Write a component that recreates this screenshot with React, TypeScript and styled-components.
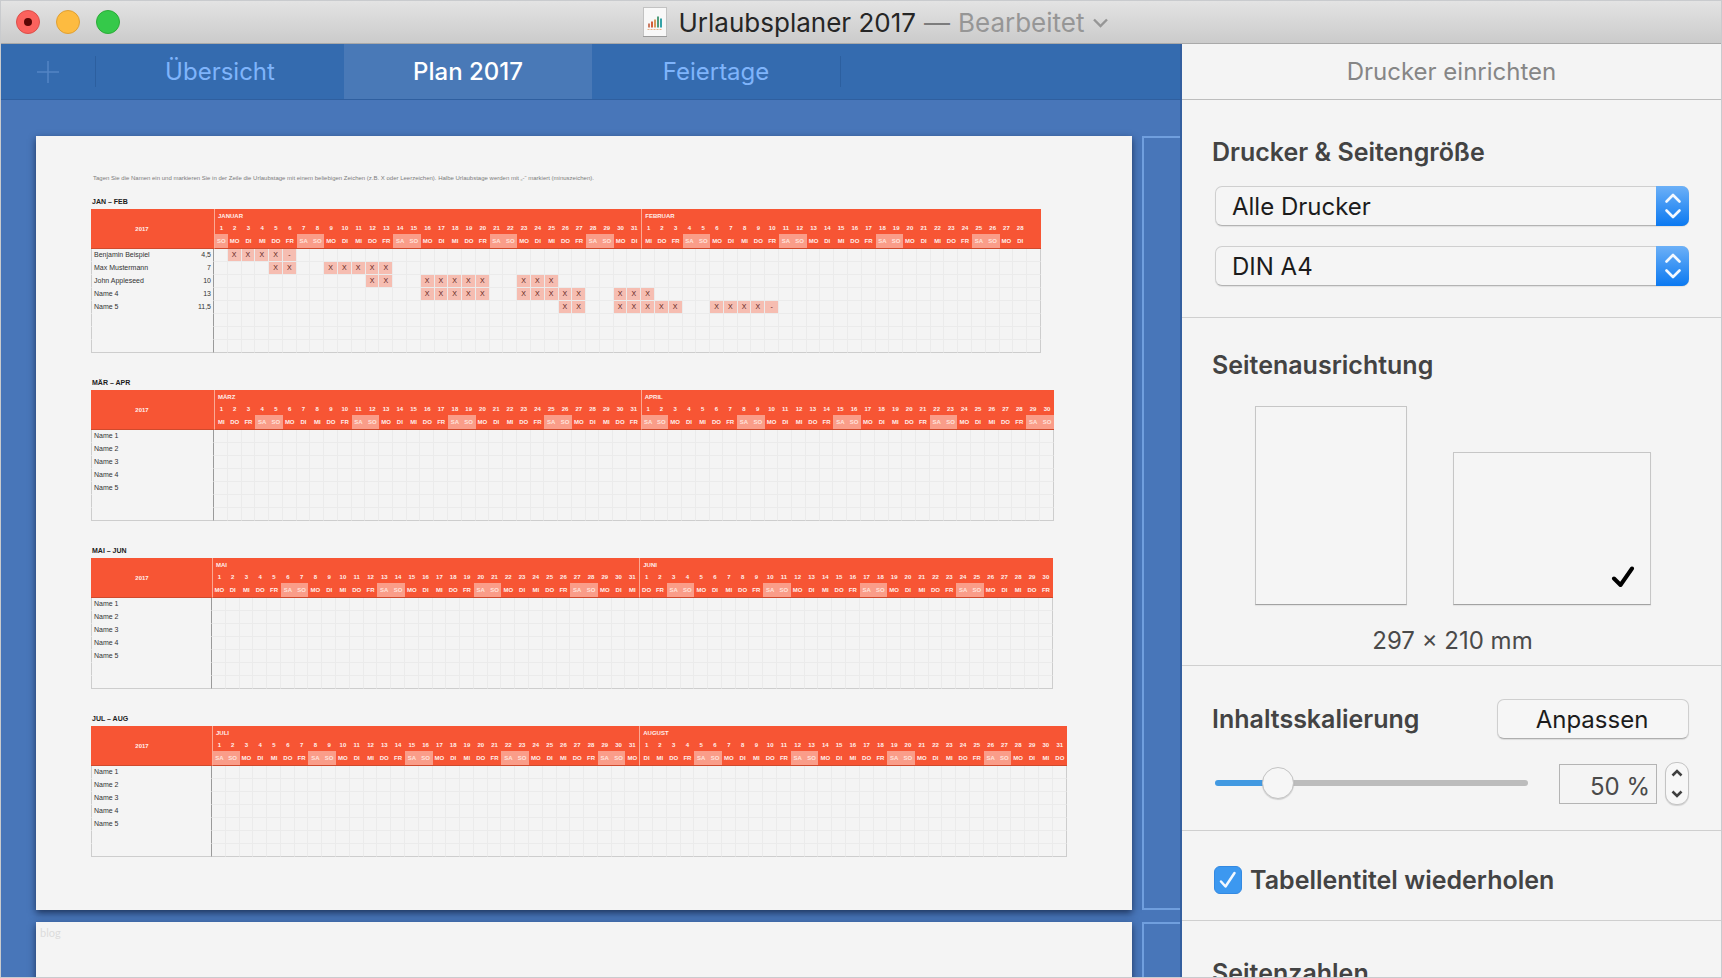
import React, { useState } from 'react';
import styled, { createGlobalStyle, css } from 'styled-components';

const GlobalStyle = createGlobalStyle`
  * { box-sizing: border-box; }
  body { margin: 0; background: #f4f4f4; }
  button, input, select { font: inherit; color: inherit; margin: 0; }
`;

const UI_FONT = 'Inter, "Liberation Sans", sans-serif';
const SHEET_FONT = '"Liberation Sans", Arial, sans-serif';

/* ---------- Window frame ---------- */

const Window = styled.div`
  display: grid;
  grid-template-rows: auto minmax(0, 1fr);
  height: 100vh;
  overflow: hidden;
  border: 1px solid #c9cbce;
  background: #f4f4f4;
  font-family: ${UI_FONT};
  font-size: 24px;
  line-height: 30px;
  color: #1c1c1c;
`;

const TitleBar = styled.header`
  display: grid;
  grid-template-columns: 140px minmax(0, 1fr) 110px;
  align-items: center;
  height: 43px;
  border-bottom: 1px solid #a9a9a9;
  background: linear-gradient(#e3e3e3, #cbcbcb);
`;

const TrafficLights = styled.div`
  display: flex;
  gap: 16px;
  padding-left: 15px;
`;

const Light = styled.button<{ $fill: string; $ring: string }>`
  display: grid;
  place-items: center;
  width: 24px;
  height: 24px;
  padding: 0;
  border: 1px solid ${(p) => p.$ring};
  border-radius: 50%;
  background: ${(p) => p.$fill};
`;

const UnsavedDot = styled.span`
  width: 8px;
  height: 8px;
  border-radius: 50%;
  background: #5c0705;
`;

const WindowTitle = styled.div`
  display: flex;
  align-items: center;
  justify-content: center;
  gap: 12px;
`;

const TitleText = styled.h1`
  display: flex;
  gap: 8px;
  margin: 0;
  padding-top: 2px;
  font-size: 26px;
  font-weight: 400;
  line-height: 32px;
  white-space: nowrap;
  color: #262626;
`;

const TitleDash = styled.span`
  color: #7c7c7c;
`;

const EditedButton = styled.button`
  display: flex;
  align-items: center;
  gap: 8px;
  padding: 0;
  border: 0;
  background: none;
  color: #969696;
`;

const Main = styled.div`
  display: grid;
  grid-template-columns: minmax(0, 1fr) 539px;
  min-height: 0;
`;

/* ---------- Document side ---------- */

const DocumentPane = styled.main`
  display: flex;
  flex-direction: column;
  min-height: 0;
  overflow: hidden;
  border-right: 2px solid #345f9f;
  background: #4876b9;
`;

const TabBar = styled.nav`
  display: flex;
  flex: none;
  align-items: center;
  height: 56px;
  border-bottom: 1px solid #2f5f9f;
  background: #346baf;
`;

const AddSheet = styled.button`
  display: grid;
  place-items: center;
  width: 94px;
  height: 100%;
  padding: 0;
  border: 0;
  background: none;
`;

const TabDivider = styled.span`
  width: 1px;
  height: 31px;
  background: #2c5f9f;
`;

const Tab = styled.button<{ $active?: boolean }>`
  width: 248px;
  height: 100%;
  padding: 1px 0 0;
  border: 0;
  background: ${(p) => (p.$active ? '#4979b7' : 'none')};
  color: ${(p) => (p.$active ? '#fff' : '#7fb4fb')};
  font-weight: ${(p) => (p.$active ? 500 : 400)};
`;

const Canvas = styled.div`
  display: grid;
  grid-template-columns: minmax(0, 1fr) 38px;
  grid-auto-rows: 774px;
  gap: 12px 10px;
  min-height: 0;
  padding: 36px 0 0 35px;
  overflow: hidden;
`;

const Sheet = styled.article`
  padding: 36px 0 0 55px;
  background: #f4f4f4;
  box-shadow: 0 3px 7px rgba(15, 30, 60, 0.75);
  font-family: ${SHEET_FONT};
`;

const BlankSheet = styled(Sheet)`
  padding: 4px;
`;

const GhostSheet = styled.div`
  border: 2px solid #709fde;
  border-right: 0;
`;

const SheetMark = styled.p`
  margin: 0;
  font-family: Lato, sans-serif;
  font-size: 11px;
  line-height: 14px;
  color: #dcdcdc;
`;

const Hint = styled.p`
  margin: 0 0 12px;
  padding-left: 2px;
  font-size: 6px;
  line-height: 12px;
  color: #7c7c7c;
  white-space: nowrap;
`;

const Period = styled.section`
  & + & {
    margin-top: 24px;
  }
`;

const PeriodTitle = styled.h2`
  margin: 0 0 2px;
  padding-left: 1px;
  font-size: 7px;
  font-weight: 700;
  line-height: 11px;
  color: #1b1b1b;
`;

const PlanTable = styled.table<{ $width: number }>`
  width: ${(p) => p.$width}px;
  table-layout: fixed;
  border-collapse: separate;
  border-spacing: 0;
  font-size: 6px;
  line-height: 8px;

  th, td {
    height: 13px;
    padding: 0;
  }

  thead th {
    background: #f75534;
    color: #fff0ec;
    font-weight: 700;
    text-align: center;
  }

  tbody {
    color: #333;
  }
`;

const NameCol = styled.col`
  width: 102px;
`;

const TotalCol = styled.col<{ $width: number }>`
  width: ${(p) => p.$width}px;
`;

const YearHead = styled.th`
  border-bottom: 1px solid #cf4a2d;
`;

const monthEdge = css<{ $edge?: boolean }>`
  ${(p) => p.$edge && 'border-left: 1px solid #fba994;'}
`;

const MonthHead = styled.th`
  border-left: 1px solid #fba994;

  && {
    padding-left: 3px;
    text-align: left;
  }
`;

const DayHead = styled.th<{ $edge?: boolean }>`
  ${monthEdge}

  && {
    height: 12px;
  }
`;

const WeekdayHead = styled.th<{ $edge?: boolean; $weekend?: boolean }>`
  ${monthEdge}

  && {
    height: 15px;
    border-bottom: 1px solid #cf4a2d;
    ${(p) => p.$weekend && 'background: #fa9d89; color: #ffe3dc;'}
  }
`;

const PersonName = styled.th<{ $last?: boolean }>`
  border-left: 1px solid #cdcdcd;
  border-bottom: 1px solid ${(p) => (p.$last ? '#cdcdcd' : 'transparent')};

  && {
    padding-left: 2px;
    font-size: 7px;
    font-weight: 400;
    text-align: left;
    white-space: nowrap;
  }
`;

const Total = styled.td<{ $last?: boolean }>`
  border-right: 1px solid #9a9a9a;
  border-bottom: 1px solid ${(p) => (p.$last ? '#cdcdcd' : 'transparent')};

  && {
    padding-right: 2px;
    font-size: 7px;
    text-align: right;
  }
`;

const DayCell = styled.td<{ $taken?: boolean; $last?: boolean; $end?: boolean }>`
  border-right: 1px solid ${(p) => (p.$end ? '#cdcdcd' : '#ebebeb')};
  border-bottom: 1px solid ${(p) => (p.$last ? '#cdcdcd' : '#ebebeb')};
  text-align: center;
  ${(p) => p.$taken && 'background: #f6bdb1; color: #5c2018; font-size: 7px;'}
`;

/* ---------- Print side ---------- */

const Sidebar = styled.aside`
  min-height: 0;
  overflow: hidden;
  background: #f4f4f4;
`;

const SidebarHeader = styled.h2`
  height: 56px;
  margin: 0;
  padding-top: 13px;
  border-bottom: 1px solid #bdbdbd;
  font-size: 24px;
  font-weight: 400;
  text-align: center;
  color: #868686;
`;

const Group = styled.section<{ $top: number; $bottom: number }>`
  padding: ${(p) => p.$top}px 32px ${(p) => p.$bottom}px 30px;
  border-bottom: 1px solid #cfcfcf;
`;

const GroupTitle = styled.h3`
  margin: 0;
  font-size: 25px;
  font-weight: 600;
  line-height: 30px;
  white-space: nowrap;
  color: #434343;
`;

const SelectList = styled.div`
  display: grid;
  gap: 20px;
  margin-top: 19px;
  padding-left: 3px;
`;

const SelectBox = styled.div`
  position: relative;
  height: 40px;
`;

const SelectField = styled.select`
  appearance: none;
  width: 100%;
  height: 100%;
  padding: 2px 48px 0 16px;
  border: 1px solid #cfcfcf;
  border-bottom-color: #b3b3b3;
  border-radius: 7px;
  background: #f5f5f5;
  box-shadow: 0 1px 1px rgba(0, 0, 0, 0.08);
`;

const SelectCap = styled.span`
  position: absolute;
  top: 0;
  right: 0;
  bottom: 0;
  display: grid;
  place-items: center;
  width: 33px;
  border-radius: 0 7px 7px 0;
  background: linear-gradient(#6cb0f7, #0b79f1);
  pointer-events: none;
`;

const OrientationGroup = styled(Group)`
  padding-right: 28px;
`;

const Orientations = styled.div`
  display: flex;
  align-items: flex-end;
  justify-content: center;
  gap: 46px;
  margin: 26px 0 21px;
`;

const Orientation = styled.label<{ $width: number; $height: number }>`
  display: flex;
  align-items: flex-end;
  justify-content: flex-end;
  position: relative;
  width: ${(p) => p.$width}px;
  height: ${(p) => p.$height}px;
  padding: 0 15px 16px 0;
  border: 1px solid #c6c6c6;
  border-bottom-color: #a2a2a2;
  background: #f5f5f5;
  box-shadow: 0 1px 1px rgba(0, 0, 0, 0.06);
`;

const OrientationRadio = styled.input`
  appearance: none;
  position: absolute;
  inset: 0;
  width: 100%;
  height: 100%;
`;

const Dimensions = styled.p`
  margin: 0;
  text-align: center;
  color: #4a4a4a;
`;

const ScaleHeader = styled.div`
  display: flex;
  align-items: center;
  justify-content: space-between;
`;

const PushButton = styled.button`
  width: 192px;
  height: 40px;
  padding: 1px 2px 0 0;
  border: 1px solid #cfcfcf;
  border-bottom-color: #aeaeae;
  border-radius: 7px;
  background: #f6f6f6;
  box-shadow: 0 1px 1px rgba(0, 0, 0, 0.1);
`;

const ScaleRow = styled.div`
  display: flex;
  align-items: center;
  margin-top: 23px;
  padding-left: 3px;
`;

const Slider = styled.input`
  appearance: none;
  flex: 1;
  min-width: 0;
  height: 34px;
  margin-bottom: 1px;
  background: none;

  &::-webkit-slider-runnable-track {
    height: 6px;
    border-radius: 3px;
    background: linear-gradient(to right, #4299e1 var(--filled), #bcbcbc var(--filled));
  }

  &::-webkit-slider-thumb {
    appearance: none;
    width: 32px;
    height: 32px;
    margin-top: -13px;
    border: 1px solid #c4c4c4;
    border-radius: 50%;
    background: #f6f6f6;
    box-shadow: 0 1px 1px rgba(0, 0, 0, 0.15);
  }
`;

const PercentField = styled.input`
  width: 98px;
  height: 40px;
  margin-left: 31px;
  padding: 5px 6px 0 0;
  border: 1px solid #b4b4b4;
  border-radius: 0;
  background: #f4f4f4;
  text-align: right;
  color: #4a4a4a;
`;

const Stepper = styled.div`
  display: grid;
  grid-template-rows: 1fr 1fr;
  width: 24px;
  height: 43px;
  margin-left: 8px;
  border: 1px solid #c4c4c4;
  border-radius: 11px;
  background: #f7f7f7;
  box-shadow: 0 1px 1px rgba(0, 0, 0, 0.14);
`;

const StepButton = styled.button`
  display: grid;
  place-items: center;
  padding: 0;
  border: 0;
  background: none;
`;

const CheckLabel = styled.label`
  display: flex;
  align-items: center;
  gap: 8px;
  padding-left: 2px;
  font-size: 25px;
  font-weight: 600;
  white-space: nowrap;
  color: #434343;
`;

const CheckBox = styled.span`
  display: grid;
  width: 28px;
  height: 28px;

  & > * {
    grid-area: 1 / 1;
    place-self: center;
  }

  svg {
    pointer-events: none;
    z-index: 1;
  }
`;

const CheckInput = styled.input`
  appearance: none;
  width: 28px;
  height: 28px;
  border: 1px solid #b4b4b4;
  border-radius: 6px;

  &:checked {
    border-color: #3389e2;
    background: #3c98f0;
  }
`;

/* ---------- Drawings ---------- */

const DocumentIcon = () => (
  <svg width="24" height="30" viewBox="0 0 24 30" aria-hidden="true">
    <rect x="0.5" y="0.5" width="23" height="29" fill="#f8f8f8" stroke="#c2c2c2" />
    <path d="M0 29.5h24" stroke="#9a9a9a" />
    <path d="M6 20.5v-4" stroke="#c97b63" strokeWidth="2" />
    <path d="M9 20.5v-6" stroke="#d4603a" strokeWidth="2" />
    <path d="M12 20.5v-8" stroke="#d99a5b" strokeWidth="2" />
    <path d="M15 20.5v-11" stroke="#4f9d7b" strokeWidth="2" />
    <path d="M18 20.5v-9" stroke="#35a3a8" strokeWidth="2" />
    <path d="M4.500 22.500h15" stroke="#e8b48a" strokeDasharray="2 1" />
  </svg>
);

const TitleChevron = () => (
  <svg width="17" height="10" viewBox="0 0 17 10" fill="none" aria-hidden="true">
    <path d="M2 1.500 8.500 8 15 1.500" stroke="#969696" strokeWidth="2.400" />
  </svg>
);

const PlusIcon = () => (
  <svg width="22" height="22" viewBox="0 0 22 22" aria-hidden="true">
    <path d="M11 0v22M0 11h22" stroke="#5385c5" strokeWidth="1.500" />
  </svg>
);

const UpDownIcon = () => (
  <svg width="18" height="26" viewBox="0 0 18 26" fill="none" stroke="#f4f9ff" strokeWidth="2.600" strokeLinecap="round" strokeLinejoin="round" aria-hidden="true">
    <path d="M2.500 8.500 9 2l6.500 6.500M2.500 17.500 9 24l6.500-6.500" />
  </svg>
);

const StepIcon = ({ down }: { down?: boolean }) => (
  <svg width="12" height="8" viewBox="0 0 12 8" fill="none" stroke="#3f3f3f" strokeWidth="2.600" aria-hidden="true">
    <path d={down ? 'M1.500 1.500 6 6l4.500-4.500' : 'M1.500 6.500 6 2l4.500 4.500'} />
  </svg>
);

const HeavyCheck = () => (
  <svg width="24" height="22" viewBox="0 0 24 22" fill="none" aria-hidden="true">
    <path d="M3 12.500 9.500 19 21 2.500" stroke="#000" strokeWidth="4" strokeLinecap="round" strokeLinejoin="round" />
  </svg>
);

const LightCheck = () => (
  <svg width="18" height="18" viewBox="0 0 18 18" fill="none" aria-hidden="true">
    <path d="M2 10.500 6.500 15.500 15.500 2" stroke="#f2f8ff" strokeWidth="2.500" strokeLinecap="round" strokeLinejoin="round" />
  </svg>
);

/* ---------- Holiday plan ---------- */

const YEAR = 2017;
const MONTHS = ['JANUAR', 'FEBRUAR', 'MÄRZ', 'APRIL', 'MAI', 'JUNI', 'JULI', 'AUGUST'];
const WEEKDAYS = ['SO', 'MO', 'DI', 'MI', 'DO', 'FR', 'SA'];

interface Person {
  name: string;
  total?: string;
  /** Column numbers counted from the first day of the period. */
  full?: number[];
  half?: number[];
}

interface PeriodData {
  title: string;
  firstMonth: number;
  width: number;
  totalWidth: number;
  rows: number;
  spare?: number;
  people: Person[];
}

const names = (count: number): Person[] =>
  Array.from({ length: count }, (_, i) => ({ name: `Name ${i + 1}` }));

const PERIODS: PeriodData[] = [
  {
    title: 'JAN – FEB',
    firstMonth: 0,
    width: 950,
    totalWidth: 21,
    rows: 8,
    spare: 1,
    people: [
      { name: 'Benjamin Beispiel', total: '4,5', full: [2, 3, 4, 5], half: [6] },
      { name: 'Max Mustermann', total: '7', full: [5, 6, 9, 10, 11, 12, 13] },
      { name: 'John Appleseed', total: '10', full: [12, 13, 16, 17, 18, 19, 20, 23, 24, 25] },
      { name: 'Name 4', total: '13', full: [16, 17, 18, 19, 20, 23, 24, 25, 26, 27, 30, 31, 32] },
      { name: 'Name 5', total: '11,5', full: [26, 27, 30, 31, 32, 33, 34, 37, 38, 39, 40], half: [41] },
    ],
  },
  { title: 'MÄR – APR', firstMonth: 2, width: 963, totalWidth: 21, rows: 7, people: names(5) },
  { title: 'MAI – JUN', firstMonth: 4, width: 962, totalWidth: 19, rows: 7, people: names(5) },
  { title: 'JUL – AUG', firstMonth: 6, width: 976, totalWidth: 19, rows: 7, people: names(5) },
];

const daysOf = (month: number) =>
  Array.from({ length: new Date(Date.UTC(YEAR, month + 1, 0)).getUTCDate() }, (_, i) => ({
    day: i + 1,
    weekday: new Date(Date.UTC(YEAR, month, i + 1)).getUTCDay(),
  }));

const PlanPeriod = ({ data }: { data: PeriodData }) => {
  const months = [data.firstMonth, data.firstMonth + 1];
  const lengths = months.map((m) => daysOf(m).length);
  const days = months.flatMap(daysOf);
  const spare = data.spare ?? 0;
  const columns = days.length + spare;

  return (
    <Period>
      <PeriodTitle>{data.title}</PeriodTitle>
      <PlanTable $width={data.width}>
        <colgroup>
          <NameCol />
          <TotalCol $width={data.totalWidth} />
          <col span={columns} />
        </colgroup>
        <thead>
          <tr>
            <YearHead rowSpan={3}>{YEAR}</YearHead>
            <YearHead rowSpan={3} />
            <MonthHead colSpan={lengths[0]}>{MONTHS[months[0]]}</MonthHead>
            <MonthHead colSpan={lengths[1] + spare}>{MONTHS[months[1]]}</MonthHead>
          </tr>
          <tr>
            {days.map((d, i) => (
              <DayHead key={i} $edge={d.day === 1}>{d.day}</DayHead>
            ))}
            {spare > 0 && <DayHead colSpan={spare} />}
          </tr>
          <tr>
            {days.map((d, i) => (
              <WeekdayHead key={i} $edge={d.day === 1} $weekend={d.weekday === 0 || d.weekday === 6}>
                {WEEKDAYS[d.weekday]}
              </WeekdayHead>
            ))}
            {spare > 0 && <WeekdayHead colSpan={spare} />}
          </tr>
        </thead>
        <tbody>
          {Array.from({ length: data.rows }, (_, r) => {
            const person = data.people[r];
            const last = r === data.rows - 1;
            return (
              <tr key={r}>
                <PersonName scope="row" $last={last}>{person?.name}</PersonName>
                <Total $last={last}>{person?.total}</Total>
                {Array.from({ length: columns }, (_, c) => {
                  const full = person?.full?.includes(c + 1);
                  const half = person?.half?.includes(c + 1);
                  return (
                    <DayCell key={c} $taken={full || half} $last={last} $end={c === columns - 1}>
                      {full ? 'X' : half ? '-' : null}
                    </DayCell>
                  );
                })}
              </tr>
            );
          })}
        </tbody>
      </PlanTable>
    </Period>
  );
};

/* ---------- App ---------- */

const TABS = ['Übersicht', 'Plan 2017', 'Feiertage'];
const SCALE_MIN = 10;
const SCALE_MAX = 250;

export default function App() {
  const [tab, setTab] = useState('Plan 2017');
  const [landscape, setLandscape] = useState(true);
  const [scale, setScale] = useState(50);
  const [repeat, setRepeat] = useState(true);

  const step = (by: number) => setScale((s) => Math.min(SCALE_MAX, Math.max(SCALE_MIN, s + by)));
  const filled = `${((scale - SCALE_MIN) / (SCALE_MAX - SCALE_MIN)) * 90 + 5}%`;

  return (
    <>
      <GlobalStyle />
      <Window>
        <TitleBar>
          <TrafficLights>
            <Light $fill="#fb625d" $ring="#dc4f4a" aria-label="Schließen"><UnsavedDot /></Light>
            <Light $fill="#fdbb40" $ring="#e0a033" aria-label="Minimieren" />
            <Light $fill="#35c94a" $ring="#2bac38" aria-label="Vollbild" />
          </TrafficLights>
          <WindowTitle>
            <DocumentIcon />
            <TitleText>
              Urlaubsplaner 2017
              <TitleDash>—</TitleDash>
              <EditedButton>Bearbeitet<TitleChevron /></EditedButton>
            </TitleText>
          </WindowTitle>
        </TitleBar>

        <Main>
          <DocumentPane>
            <TabBar>
              <AddSheet aria-label="Blatt hinzufügen"><PlusIcon /></AddSheet>
              <TabDivider />
              {TABS.map((name) => (
                <Tab key={name} $active={name === tab} onClick={() => setTab(name)}>{name}</Tab>
              ))}
              <TabDivider />
            </TabBar>
            <Canvas>
              <Sheet>
                <Hint>
                  Tagen Sie die Namen ein und markieren Sie in der Zeile die Urlaubstage mit einem beliebigen Zeichen (z.B. X oder Leerzeichen). Halbe Urlaubstage werden mit „-“ markiert (minuszeichen).
                </Hint>
                {PERIODS.map((p) => <PlanPeriod key={p.title} data={p} />)}
              </Sheet>
              <GhostSheet />
              <BlankSheet><SheetMark>blog</SheetMark></BlankSheet>
              <GhostSheet />
            </Canvas>
          </DocumentPane>

          <Sidebar>
            <SidebarHeader>Drucker einrichten</SidebarHeader>

            <Group $top={37} $bottom={31}>
              <GroupTitle>Drucker &amp; Seitengröße</GroupTitle>
              <SelectList>
                <SelectBox>
                  <SelectField aria-label="Drucker"><option>Alle Drucker</option></SelectField>
                  <SelectCap><UpDownIcon /></SelectCap>
                </SelectBox>
                <SelectBox>
                  <SelectField aria-label="Seitengröße"><option>DIN A4</option></SelectField>
                  <SelectCap><UpDownIcon /></SelectCap>
                </SelectBox>
              </SelectList>
            </Group>

            <OrientationGroup $top={32} $bottom={9}>
              <GroupTitle>Seitenausrichtung</GroupTitle>
              <Orientations>
                <Orientation $width={152} $height={199}>
                  <OrientationRadio type="radio" name="orientation" aria-label="Hochformat" checked={!landscape} onChange={() => setLandscape(false)} />
                  {!landscape && <HeavyCheck />}
                </Orientation>
                <Orientation $width={198} $height={153}>
                  <OrientationRadio type="radio" name="orientation" aria-label="Querformat" checked={landscape} onChange={() => setLandscape(true)} />
                  {landscape && <HeavyCheck />}
                </Orientation>
              </Orientations>
              <Dimensions>{landscape ? '297 × 210 mm' : '210 × 297 mm'}</Dimensions>
            </OrientationGroup>

            <Group $top={33} $bottom={25}>
              <ScaleHeader>
                <GroupTitle>Inhaltsskalierung</GroupTitle>
                <PushButton>Anpassen</PushButton>
              </ScaleHeader>
              <ScaleRow>
                <Slider
                  type="range"
                  aria-label="Inhaltsskalierung"
                  min={SCALE_MIN}
                  max={SCALE_MAX}
                  value={scale}
                  onChange={(e) => setScale(Number(e.target.value))}
                  style={{ '--filled': filled } as React.CSSProperties}
                />
                <PercentField aria-label="Skalierung in Prozent" value={`${scale} %`} readOnly />
                <Stepper>
                  <StepButton aria-label="Größer" onClick={() => step(1)}><StepIcon /></StepButton>
                  <StepButton aria-label="Kleiner" onClick={() => step(-1)}><StepIcon down /></StepButton>
                </Stepper>
              </ScaleRow>
            </Group>

            <Group $top={34} $bottom={25}>
              <CheckLabel>
                <CheckBox>
                  <CheckInput type="checkbox" checked={repeat} onChange={(e) => setRepeat(e.target.checked)} />
                  {repeat && <LightCheck />}
                </CheckBox>
                Tabellentitel wiederholen
              </CheckLabel>
            </Group>

            <Group $top={37} $bottom={31}>
              <GroupTitle>Seitenzahlen</GroupTitle>
            </Group>
          </Sidebar>
        </Main>
      </Window>
    </>
  );
}
